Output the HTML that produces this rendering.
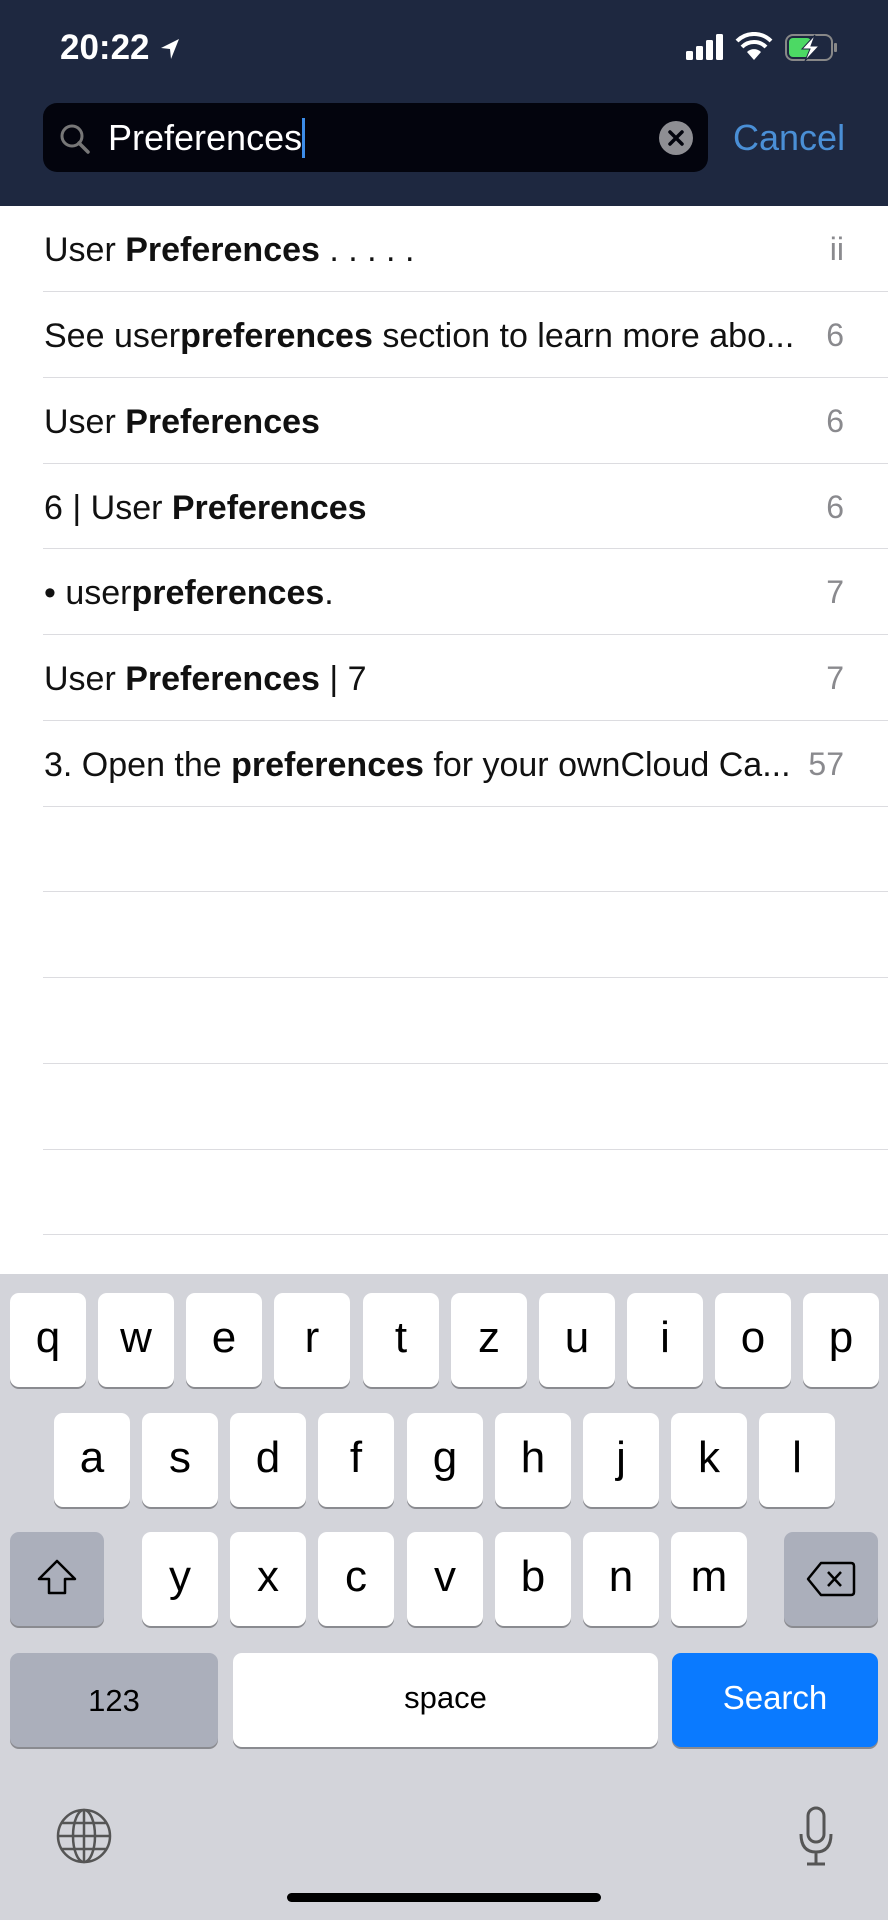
<!DOCTYPE html>
<html><head><meta charset="utf-8"><style>
*{margin:0;padding:0;box-sizing:border-box}
body{width:888px;height:1920px;overflow:hidden;background:#fff;font-family:"Liberation Sans",sans-serif;position:relative}
.hdr{position:absolute;left:0;top:0;width:888px;height:206px;background:#1e2840}
.time{position:absolute;left:60px;top:28px;color:#fff;font-size:35px;font-weight:bold}
.search{position:absolute;left:43px;top:103px;width:665px;height:69px;background:#03040d;border-radius:14px}
.stext{position:absolute;left:108px;top:117px;color:#fff;font-size:36px}
.caret{display:inline-block;width:3px;height:40px;background:#3c8ce8;vertical-align:-8px}
.cancel{position:absolute;left:733px;top:117px;color:#4a8fd6;font-size:36px}
.row{position:absolute;left:0;width:888px;height:86px}
.row .t{position:absolute;left:44px;top:25px;font-size:34px;color:#111;white-space:nowrap}
.row .n{position:absolute;right:44px;top:25px;font-size:32px;color:#8a8a8e}
.sep{position:absolute;left:43px;right:0;height:1px;background:#dcdce0}
.kb{position:absolute;left:0;top:1274px;width:888px;height:646px;background:#d3d4da}
.k{position:absolute;width:76px;height:94px;background:#fff;border-radius:9px;box-shadow:0 2px 0 #8a8b90;text-align:center;font-size:44px;line-height:90px;color:#000}
.g{background:#abafbb}
.home{position:absolute;left:287px;top:1893px;width:314px;height:9px;border-radius:5px;background:#000}
</style></head><body>
<div class="hdr">
<div class="time">20:22 <svg width="22" height="24" viewBox="0 0 22 24" style="vertical-align:-2px"><path d="M20 2 L2 11 L11 12 L12 22 Z" fill="#fff"/></svg></div>
<svg style="position:absolute;left:684px;top:32px" width="160" height="32" viewBox="0 0 160 32">
<rect x="2" y="19" width="7" height="9" rx="1.5" fill="#fff"/><rect x="12" y="14" width="7" height="14" rx="1.5" fill="#fff"/><rect x="22" y="8" width="7" height="20" rx="1.5" fill="#fff"/><rect x="32" y="2" width="7" height="26" rx="1.5" fill="#fff"/>
<path d="M70 28 L63 20 A10 10 0 0 1 77 20 Z" fill="#fff"/>
<path d="M58 15 A17 17 0 0 1 82 15" stroke="#fff" stroke-width="4" fill="none"/>
<path d="M53 9 A24 24 0 0 1 87 9" stroke="#fff" stroke-width="4" fill="none"/>
<rect x="102" y="3" width="46" height="25" rx="7" stroke="#888" stroke-width="2" fill="none"/>
<rect x="105" y="6" width="22" height="19" rx="4" fill="#4cd964"/>
<rect x="150" y="11" width="3" height="9" rx="1" fill="#888"/>
<path d="M131 3 L118 17 H126 L121 29 L135 14 H127 Z" fill="#fff" stroke="#1e2840" stroke-width="1"/>
</svg>
<div class="search"></div>
<svg style="position:absolute;left:58px;top:122px" width="34" height="34" viewBox="0 0 34 34"><circle cx="14" cy="14" r="10" stroke="#777" stroke-width="3" fill="none"/><path d="M21 21 L30 30" stroke="#777" stroke-width="3.5" stroke-linecap="round"/></svg>
<div class="stext">Preferences<span class="caret"></span></div>
<svg style="position:absolute;left:658px;top:120px" width="36" height="36" viewBox="0 0 36 36"><circle cx="18" cy="18" r="17" fill="#8e8e93"/><path d="M12 12 L24 24 M24 12 L12 24" stroke="#03040d" stroke-width="3.5" stroke-linecap="round"/></svg>
<div class="cancel">Cancel</div>
</div>

<div class="row" style="top:206px"><div class="t">User <b>Preferences</b> . . . . .</div><div class="n">ii</div></div>
<div class="sep" style="top:291px"></div>
<div class="row" style="top:292px"><div class="t">See user<b>preferences</b> section to learn more abo...</div><div class="n">6</div></div>
<div class="sep" style="top:377px"></div>
<div class="row" style="top:378px"><div class="t">User <b>Preferences</b></div><div class="n">6</div></div>
<div class="sep" style="top:463px"></div>
<div class="row" style="top:464px"><div class="t">6 | User <b>Preferences</b></div><div class="n">6</div></div>
<div class="sep" style="top:548px"></div>
<div class="row" style="top:549px"><div class="t">• user<b>preferences</b>.</div><div class="n">7</div></div>
<div class="sep" style="top:634px"></div>
<div class="row" style="top:635px"><div class="t">User <b>Preferences</b> | 7</div><div class="n">7</div></div>
<div class="sep" style="top:720px"></div>
<div class="row" style="top:721px"><div class="t">3. Open the <b>preferences</b> for your ownCloud Ca...</div><div class="n" style="right:44px">57</div></div>
<div class="sep" style="top:806px"></div>
<div class="sep" style="top:891px"></div>
<div class="sep" style="top:977px"></div>
<div class="sep" style="top:1063px"></div>
<div class="sep" style="top:1149px"></div>
<div class="sep" style="top:1234px"></div>

<div class="kb"></div>
<div class="k" style="left:10px;top:1293px">q</div><div class="k" style="left:98px;top:1293px">w</div><div class="k" style="left:186px;top:1293px">e</div><div class="k" style="left:274px;top:1293px">r</div><div class="k" style="left:363px;top:1293px">t</div><div class="k" style="left:451px;top:1293px">z</div><div class="k" style="left:539px;top:1293px">u</div><div class="k" style="left:627px;top:1293px">i</div><div class="k" style="left:715px;top:1293px">o</div><div class="k" style="left:803px;top:1293px">p</div>
<div class="k" style="left:54px;top:1413px">a</div><div class="k" style="left:142px;top:1413px">s</div><div class="k" style="left:230px;top:1413px">d</div><div class="k" style="left:318px;top:1413px">f</div><div class="k" style="left:407px;top:1413px">g</div><div class="k" style="left:495px;top:1413px">h</div><div class="k" style="left:583px;top:1413px">j</div><div class="k" style="left:671px;top:1413px">k</div><div class="k" style="left:759px;top:1413px">l</div>
<div class="k g" style="left:10px;top:1532px;width:94px"><svg width="44" height="44" viewBox="0 0 44 44" style="margin-top:24px"><path d="M22 5 L40 23 H30 V37 H14 V23 H4 Z" fill="none" stroke="#000" stroke-width="2.5" stroke-linejoin="round"/></svg></div>
<div class="k" style="left:142px;top:1532px">y</div><div class="k" style="left:230px;top:1532px">x</div><div class="k" style="left:318px;top:1532px">c</div><div class="k" style="left:407px;top:1532px">v</div><div class="k" style="left:495px;top:1532px">b</div><div class="k" style="left:583px;top:1532px">n</div><div class="k" style="left:671px;top:1532px">m</div>
<div class="k g" style="left:784px;top:1532px;width:94px"><svg width="52" height="40" viewBox="0 0 52 40" style="margin-top:27px"><path d="M16 4 H46 Q49 4 49 7 V33 Q49 36 46 36 H16 L3 20 Z" fill="none" stroke="#000" stroke-width="2.5" stroke-linejoin="round"/><path d="M23 13 L36 27 M36 13 L23 27" stroke="#000" stroke-width="2.5"/></svg></div>
<div class="k g" style="left:10px;top:1653px;width:208px;font-size:31px;line-height:96px">123</div>
<div class="k" style="left:233px;top:1653px;width:425px;font-size:31px;line-height:90px">space</div>
<div class="k" style="left:672px;top:1653px;width:206px;background:#0a7aff;color:#fff;font-size:33px;line-height:90px">Search</div>
<svg style="position:absolute;left:55px;top:1807px" width="58" height="58" viewBox="0 0 58 58"><g fill="none" stroke="#555" stroke-width="2.5"><circle cx="29" cy="29" r="26"/><ellipse cx="29" cy="29" rx="11" ry="26"/><path d="M29 3 V55 M3 29 H55 M7 16 H51 M7 42 H51"/></g></svg>
<svg style="position:absolute;left:796px;top:1806px" width="40" height="62" viewBox="0 0 40 62"><g fill="none" stroke="#555" stroke-width="3"><rect x="12" y="2" width="16" height="34" rx="8"/><path d="M5 28 Q5 46 20 46 Q35 46 35 28 M20 46 V58 M11 58 H29"/></g></svg>
<div class="home"></div>
</body></html>
